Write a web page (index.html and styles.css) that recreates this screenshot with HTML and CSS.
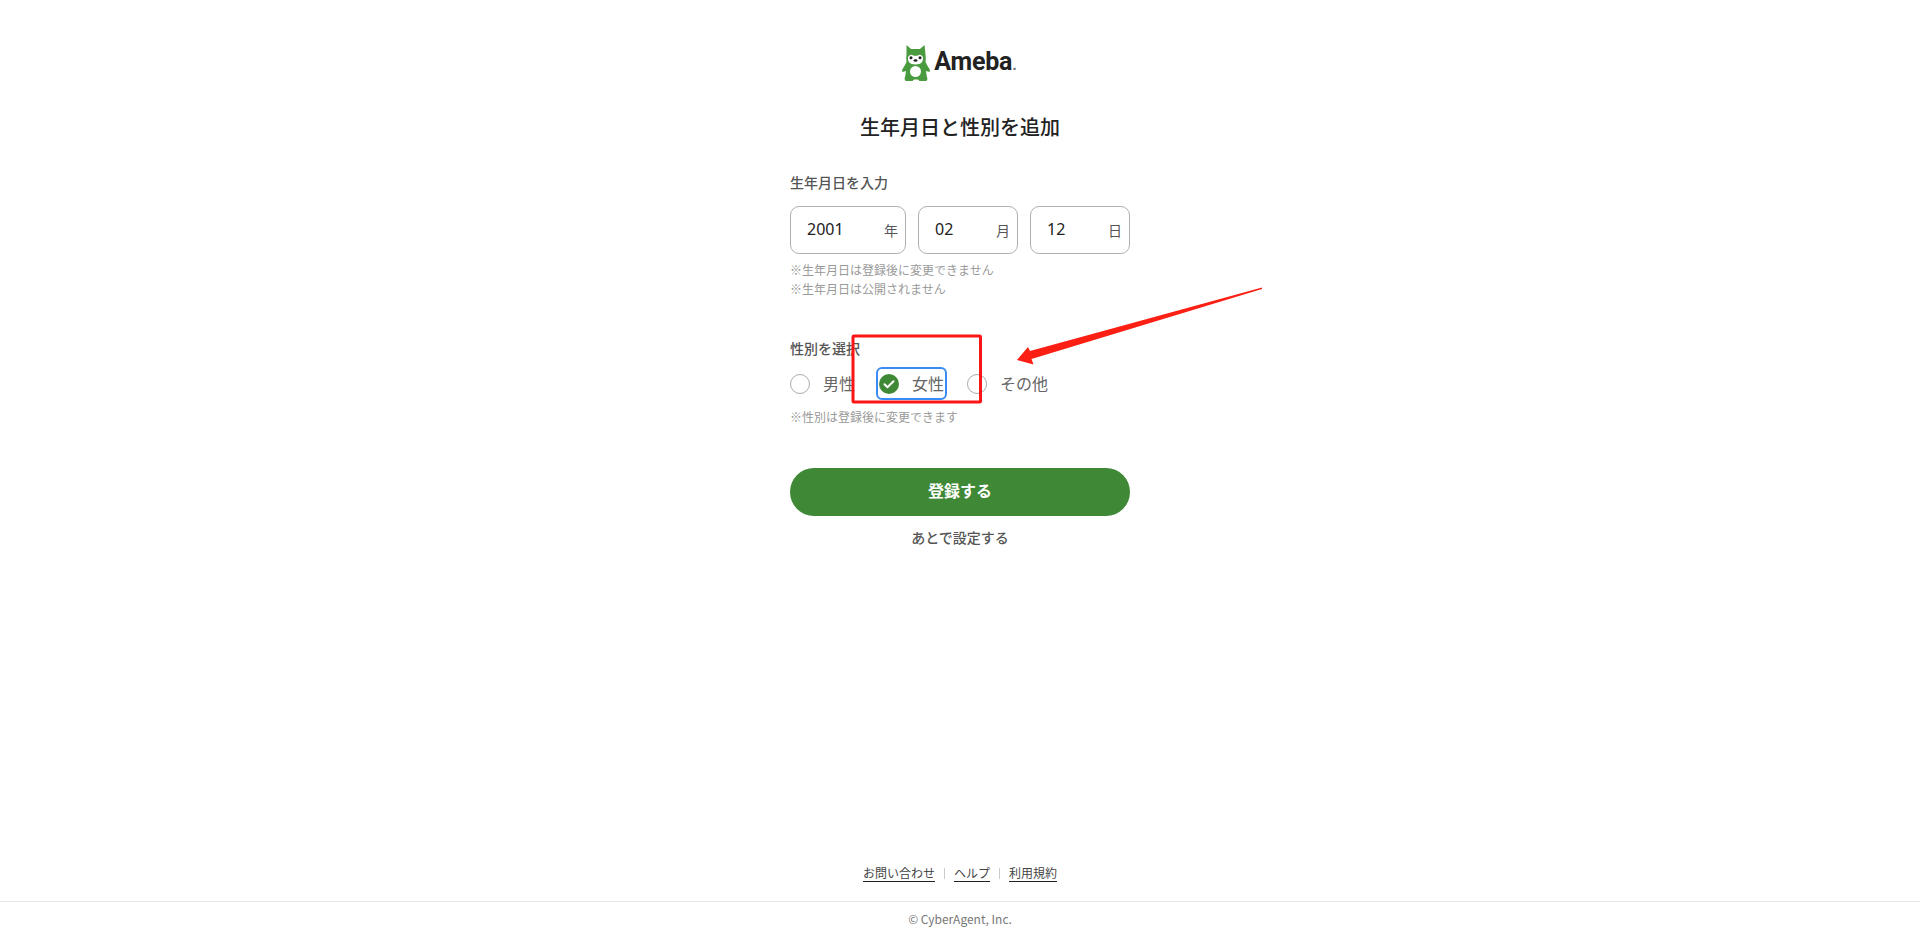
FILE: index.html
```html
<!DOCTYPE html>
<html lang="ja">
<head>
<meta charset="utf-8">
<title>生年月日と性別を追加</title>
<link rel="stylesheet" href="styles.css">
</head>
<body>
<div class="page">
  <main class="main">
    <div class="logo">
      <svg class="logo-mark" width="29" height="36" viewBox="0 0 29 36" aria-hidden="true">
        <path fill="#4a9a3f" d="M5.500 0l4.500 4h9l4.500-4 1 9.500c.4 2.500.4 5 0 7.500 1.300 2.600 2.800 5.500 4.500 8l-.5 2-3.500-1c.3 2.500.6 5 1.500 8l-1 2h-7l-1.500-1.500h-4L11.500 36h-7l-1-2c.9-3 1.200-5.500 1.500-8l-3.500 1-.5-2c1.700-2.500 3.200-5.400 4.500-8-.4-2.500-.4-5 0-7.500z"/>
        <circle cx="14.500" cy="26.500" r="5.500" fill="#fff"/>
        <path fill="#fff" d="M7 12.500a3.300 3.300 0 0 1 5.600-1.800h3.800a3.300 3.300 0 0 1 5.600 1.800c.3 3-1 5.300-3 6.200-2.500 1-6.500 1-9 0-2-.9-3.300-3.200-3-6.200z"/>
        <circle cx="10" cy="12.800" r="1.500" fill="#222"/>
        <circle cx="19" cy="12.800" r="1.500" fill="#222"/>
        <ellipse cx="14.500" cy="15.500" rx="2" ry="1.300" fill="#222"/>
      </svg>
      <span class="logo-text">Ameba<span class="logo-dot">.</span></span>
    </div>
    <h1 class="title">生年月日と性別を追加</h1>

    <form class="form">
      <p class="label">生年月日を入力</p>
      <div class="dates">
        <div class="date"><span class="date-value">2001</span><span class="date-unit">年</span></div>
        <div class="date"><span class="date-value">02</span><span class="date-unit">月</span></div>
        <div class="date"><span class="date-value">12</span><span class="date-unit">日</span></div>
      </div>
      <p class="note note-first">※生年月日は登録後に変更できません</p>
      <p class="note">※生年月日は公開されません</p>

      <p class="label label-gender">性別を選択</p>
      <div class="radios">
        <div class="radio"><span class="radio-circle"></span><span class="radio-text">男性</span></div>
        <div class="radio radio-focus">
          <svg class="radio-check" width="20" height="20" viewBox="0 0 20 20" aria-hidden="true">
            <circle cx="10" cy="10" r="10" fill="#3f8936"/>
            <path d="M5.500 10.300l3 2.900 6-6" fill="none" stroke="#fff" stroke-width="2" stroke-linecap="round" stroke-linejoin="round"/>
          </svg>
          <span class="radio-text">女性</span>
        </div>
        <div class="radio radio-last"><span class="radio-circle"></span><span class="radio-text">その他</span></div>
      </div>
      <p class="note note-gender">※性別は登録後に変更できます</p>

      <div class="submit">登録する</div>
      <p class="later">あとで設定する</p>
    </form>
  </main>

  <footer class="footer">
    <nav class="footer-links">
      <a class="footer-link">お問い合わせ</a>
      <span class="footer-sep"></span>
      <a class="footer-link">ヘルプ</a>
      <span class="footer-sep"></span>
      <a class="footer-link">利用規約</a>
    </nav>
    <p class="copyright">© CyberAgent, Inc.</p>
  </footer>
</div>

<svg class="annotation" width="1920" height="937" viewBox="0 0 1920 937" aria-hidden="true">
  <rect x="853" y="336" width="127.500" height="66" rx="1" fill="none" stroke="#fb1515" stroke-width="3"/>
  <path d="M1262 287.500L1030 351 1028 347 1017 360 1033.500 364.500 1031.500 359 1262 289z" fill="#fb1f14"/>
</svg>
</body>
</html>
```
FILE: styles.css
```css
* { box-sizing: border-box; }
html, body { margin: 0; padding: 0; background: #fff; }
body {
  font-family: "Noto Sans CJK JP", "Noto Sans", sans-serif;
  color: #555;
  position: relative;
  overflow: hidden;
}
p, h1 { margin: 0; }

.page {
  height: 937px;
  display: flex;
  flex-direction: column;
}
.main {
  flex: 1;
  display: flex;
  flex-direction: column;
  align-items: center;
  padding-top: 44px;
}

.logo {
  display: flex;
  align-items: center;
  height: 37px;
  gap: 4px;
  margin-right: 2px;
}
.logo-mark { display: block; }
.logo-text {
  font-family: "Roboto", "Liberation Sans", sans-serif;
  font-weight: 700;
  font-size: 25px;
  line-height: 37px;
  letter-spacing: -0.2px;
  color: #222;
}
.logo-dot { color: #777; font-size: 16px; }

.title {
  margin-top: 31px;
  font-size: 20px;
  font-weight: 500;
  line-height: 30px;
  color: #222;
}

.form {
  width: 340px;
  margin-top: 30px;
}
.label {
  font-size: 14px;
  font-weight: 500;
  line-height: 20px;
  color: #555;
}
.dates {
  display: grid;
  grid-template-columns: 116px 100px 100px;
  column-gap: 12px;
  margin-top: 14px;
}
.date {
  height: 48px;
  border: 1px solid #b0b0b0;
  border-radius: 9px;
  display: flex;
  align-items: center;
  justify-content: space-between;
  padding: 0 7px 2px 16px;
}
.date-value {
  font-size: 16px;
  color: #222;
  font-family: "Noto Sans", sans-serif;
}
.date-unit {
  font-size: 14px;
  color: #555;
  padding-top: 1px;
}

.note {
  font-size: 12px;
  line-height: 19px;
  color: #999;
}
.note-first { margin-top: 6px; }

.label-gender { margin-top: 40px; }

.radios {
  display: flex;
  align-items: center;
  gap: 18px;
  margin: 9px 0 0 -3px;
}
.radio {
  width: 71px;
  height: 33px;
  display: flex;
  align-items: center;
  gap: 13px;
  padding: 0 3px;
  border-radius: 6px;
  flex: none;
}
.radio-focus { outline: 2px solid #3a8bf3; outline-offset: -2px; }
.radio-last { width: auto; margin-left: -1px; }
.radio-circle {
  width: 20px;
  height: 20px;
  border: 1px solid #aaa;
  border-radius: 50%;
  flex: none;
}
.radio-check { display: block; flex: none; }
.radio-text {
  font-size: 16px;
  line-height: 24px;
  color: #666;
  white-space: nowrap;
  padding-bottom: 2px;
}
.note-gender { margin-top: 7px; }

.submit {
  margin-top: 42px;
  height: 48px;
  border-radius: 24px;
  background: #3f8936;
  color: #fff;
  font-size: 16px;
  font-weight: 700;
  display: flex;
  align-items: center;
  justify-content: center;
  padding-bottom: 4px;
}
.later {
  margin-top: 9px;
  text-align: center;
  font-size: 14px;
  font-weight: 500;
  line-height: 24px;
  color: #555;
}

.footer { flex: none; }
.footer-links {
  display: flex;
  justify-content: center;
  align-items: center;
  gap: 9px;
  height: 20px;
}
.footer-link {
  font-size: 12px;
  line-height: 16px;
  color: #444;
  border-bottom: 1px solid #222;
  height: 17px;
}
.footer-sep {
  width: 1px;
  height: 11px;
  background: #ccc;
}
.copyright {
  margin-top: 18px;
  border-top: 1px solid #e8e8e8;
  height: 36px;
  line-height: 33px;
  text-align: center;
  font-size: 12px;
  color: #777;
}

.annotation {
  position: absolute;
  left: 0;
  top: 0;
  pointer-events: none;
}
```
